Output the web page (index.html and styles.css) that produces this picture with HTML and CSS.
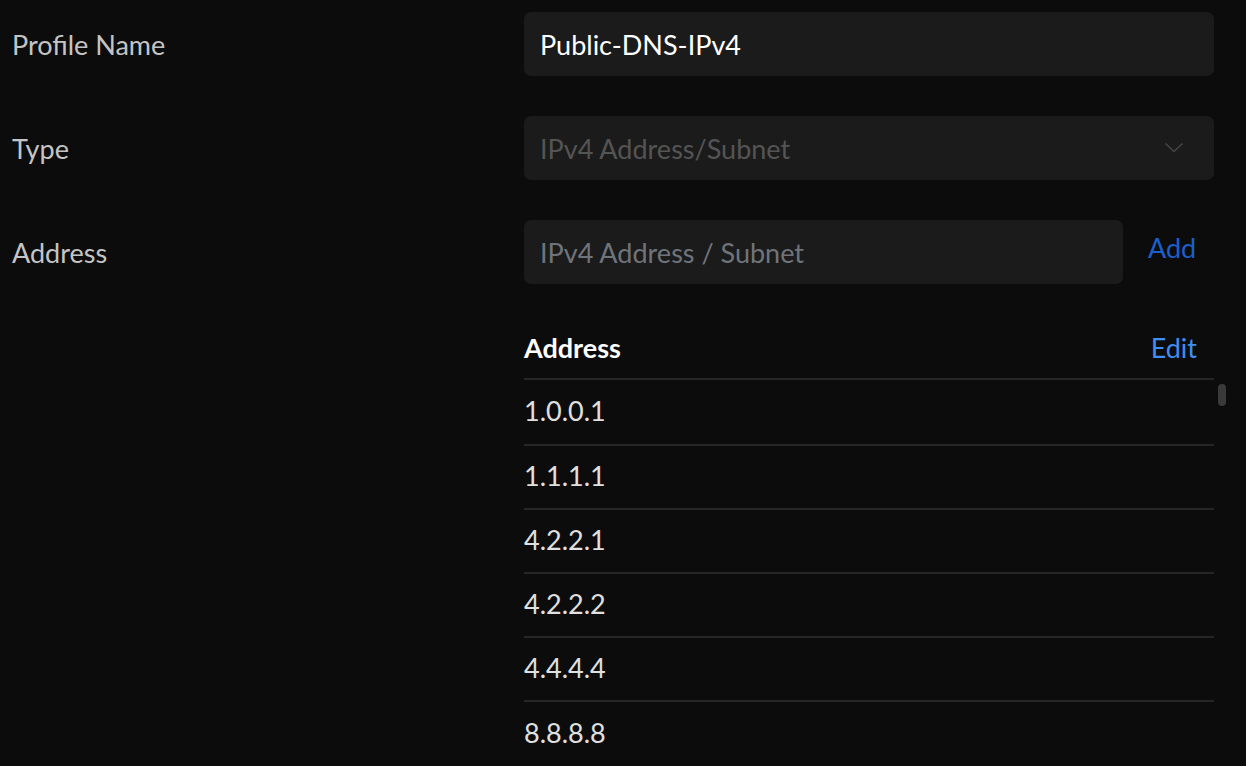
FILE: index.html
```html
<!DOCTYPE html>
<html lang="en">
<head>
<meta charset="utf-8">
<title>Profile</title>
<link rel="stylesheet" href="styles.css">
</head>
<body>
<div class="form">
  <div class="row">
    <div class="label">Profile Name</div>
    <div class="control">
      <div class="field value">Public-DNS-IPv4</div>
    </div>
  </div>
  <div class="row">
    <div class="label">Type</div>
    <div class="control">
      <div class="field select">
        <span class="disabled">IPv4 Address/Subnet</span>
        <svg class="chev" width="20" height="12" viewBox="0 0 20 12"><path d="M1.5 1.5 L10 9.5 L18.5 1.5" fill="none" stroke="#454545" stroke-width="1.6"/></svg>
      </div>
    </div>
  </div>
  <div class="row top">
    <div class="label">Address</div>
    <div class="control">
      <div class="addline">
        <div class="field input placeholder">IPv4 Address / Subnet</div>
        <span class="link add">Add</span>
      </div>
      <div class="table">
        <div class="thead">
          <span class="th">Address</span>
          <span class="link edit">Edit</span>
        </div>
        <div class="tbody">
          <div class="tr">1.0.0.1</div>
          <div class="tr">1.1.1.1</div>
          <div class="tr">4.2.2.1</div>
          <div class="tr">4.2.2.2</div>
          <div class="tr">4.4.4.4</div>
          <div class="tr last">8.8.8.8</div>
          <div class="thumb"></div>
        </div>
      </div>
    </div>
  </div>
</div>
</body>
</html>
```
FILE: styles.css
```css
html, body {
  margin: 0;
  padding: 0;
  background: #0c0c0c;
  height: 100%;
  overflow: hidden;
}
body {
  font-family: "Lato", "Noto Sans", sans-serif;
  font-size: 27px;
  color: #c6c6c6;
}
.form {
  display: flex;
  flex-direction: column;
  gap: 40px;
  padding: 12px 0 0 12px;
}
.row {
  display: flex;
  align-items: center;
}
.row.top {
  align-items: flex-start;
}
.label {
  width: 512px;
  flex: none;
  height: 64px;
  display: flex;
  align-items: center;
  color: #c4c4c4;
}
.control {
  width: 690px;
  flex: none;
}
.field {
  height: 64px;
  background: #1b1b1b;
  border-radius: 7px;
  box-sizing: border-box;
  padding: 0 16px;
  display: flex;
  align-items: center;
}
.value {
  color: #ffffff;
}
.select {
  justify-content: space-between;
  padding-right: 30px;
}
.disabled {
  color: #545454;
}
.chev {
  display: block;
}
.addline {
  display: flex;
  align-items: center;
  gap: 25px;
}
.input {
  width: 599px;
  flex: none;
}
.placeholder {
  color: #6f747b;
}
.link.add {
  color: #1b5fcb;
  margin-top: -9px;
}
.table {
  margin-top: 32px;
}
.thead {
  height: 62px;
  display: flex;
  align-items: center;
  justify-content: space-between;
  border-bottom: 2px solid #262626;
  padding-right: 17px;
}
.th {
  color: #ffffff;
  font-weight: 700;
}
.edit {
  color: #3f8ef0;
}
.tbody {
  position: relative;
}
.tr {
  height: 64px;
  box-sizing: border-box;
  display: flex;
  align-items: center;
  border-bottom: 2px solid #262626;
  color: #e0e0e0;
  padding-bottom: 4px;
}
.tr:first-child {
  height: 66px;
}
.tr.last {
  border-bottom: none;
}
.thumb {
  position: absolute;
  left: 694px;
  top: 4px;
  width: 8px;
  height: 22px;
  border-radius: 4px;
  background: #3a3a3a;
}
```
